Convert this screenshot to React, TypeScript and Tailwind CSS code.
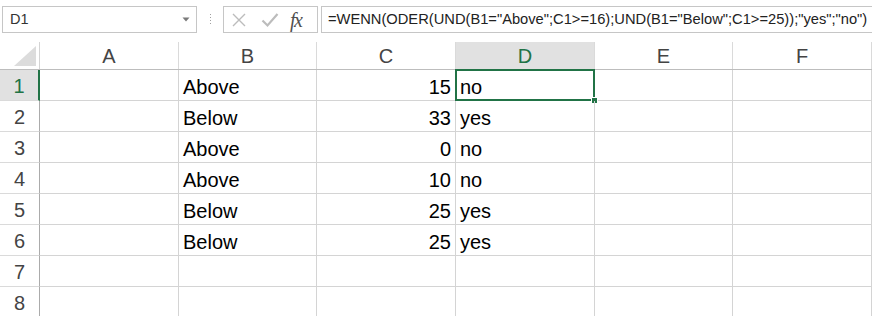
import React from "react";

const cols = ["A", "B", "C", "D", "E", "F"];
const widths = ["w-[139px]", "w-[138px]", "w-[139px]", "w-[139px]", "w-[138px]", "w-[139px]"];

const rows: { b: string; c: string; d: string }[] = [
  { b: "Above", c: "15", d: "no" },
  { b: "Below", c: "33", d: "yes" },
  { b: "Above", c: "0", d: "no" },
  { b: "Above", c: "10", d: "no" },
  { b: "Below", c: "25", d: "yes" },
  { b: "Below", c: "25", d: "yes" },
  { b: "", c: "", d: "" },
  { b: "", c: "", d: "" },
];

const FormulaBar = () => (
  <div className="flex items-start h-[42px] pt-[6px] bg-white">
    <div className="ml-[2px] w-[195px] h-[27px] border border-[#c6c6c6] flex items-center justify-between pl-[7px] pr-[6px] text-[14.5px] text-[#333]">
      <span>D1</span>
      <svg width="8" height="5" viewBox="0 0 8 5">
        <path d="M0.5 0.5 L7.5 0.5 L4 4.5 Z" fill="#7a7a7a" />
      </svg>
    </div>
    <div className="w-[26px] h-[27px] flex items-center justify-center">
      <svg width="3" height="11" viewBox="0 0 3 11">
        <rect x="1" y="0" width="1" height="1" fill="#a0a0a0" />
        <rect x="1" y="3" width="1" height="1" fill="#a0a0a0" />
        <rect x="1" y="6" width="1" height="1" fill="#a0a0a0" />
        <rect x="1" y="9" width="1" height="1" fill="#a0a0a0" />
      </svg>
    </div>
    <div className="w-[95px] h-[27px] border border-[#c6c6c6] flex items-center">
      <svg className="ml-[7px]" width="16" height="16" viewBox="0 0 16 16">
        <path d="M2 2 L14 14 M14 2 L2 14" stroke="#bcbcbc" strokeWidth="1.4" fill="none" />
      </svg>
      <svg className="ml-[14px]" width="18" height="16" viewBox="0 0 18 16">
        <path d="M1.5 8.5 L6.5 13.5 L16.5 2" stroke="#bcbcbc" strokeWidth="2.2" fill="none" />
      </svg>
      <span className="ml-[11px] text-[20px] leading-none italic text-[#505050] font-['Liberation_Serif',serif] tracking-[-1.5px]">fx</span>
    </div>
    <div className="ml-[3px] flex-1 h-[27px] border border-r-0 border-[#c6c6c6] flex items-center pl-[6px] text-[14.7px] text-[#222] whitespace-nowrap overflow-hidden">
      =WENN(ODER(UND(B1="Above";C1&gt;=16);UND(B1="Below";C1&gt;=25));"yes";"no")
    </div>
  </div>
);

const HeaderRow = () => (
  <div className="flex h-[28px] border-b border-[#bdbdbd]">
    <div className="w-[40px] border-r border-[#d4d4d4] flex items-end justify-end pr-[3px] pb-[3px]">
      <svg width="22" height="20" viewBox="0 0 22 20">
        <path d="M22 0 L22 20 L0 20 Z" fill="#dcdcdc" />
      </svg>
    </div>
    {cols.map((c, i) => (
      <div
        key={c}
        className={`${widths[i]} flex items-center justify-center border-r border-[#dadada] text-[20px] ${
          c === "D" ? "bg-[#e1e1e1] text-[#217346]" : "text-[#444]"
        }`}
      >
        {c}
      </div>
    ))}
  </div>
);

const App = () => {
  return (
    <div className="w-[872px] h-[316px] overflow-hidden bg-white font-['Liberation_Sans',Arial,sans-serif]">
      <FormulaBar />
      <HeaderRow />
      {rows.map((r, i) => (
        <div key={i} className="flex h-[31px]">
          <div
            className={`w-[40px] flex items-end justify-center border-b border-[#dadada] border-r text-[20px] leading-[24px] pb-[2px] ${
              i === 0 ? "bg-[#e1e1e1] text-[#217346] border-r-[#217346] border-r-2" : "text-[#444] border-r-[#ababab]"
            }`}
          >
            {i + 1}
          </div>
          <div className="w-[139px] border-r border-b border-[#d4d4d4]" />
          <div className="w-[138px] border-r border-b border-[#d4d4d4] flex items-end pl-[4px] pb-[1px] text-[20px] leading-[24px] text-black">
            {r.b}
          </div>
          <div className="w-[139px] border-r border-b border-[#d4d4d4] flex items-end justify-end pr-[4px] pb-[1px] text-[20px] leading-[24px] text-black">
            {r.c}
          </div>
          <div className="relative w-[139px] border-r border-b border-[#d4d4d4] flex items-end pl-[4px] pb-[1px] text-[20px] leading-[24px] text-black">
            {r.d}
            {i === 0 && (
              <>
                <div className="absolute left-[-1px] top-[-1px] right-[-1px] bottom-[-1px] border-2 border-[#217346]" />
                <div className="absolute right-[-4px] bottom-[-4px] w-[7px] h-[7px] bg-[#217346] border border-white" />
              </>
            )}
          </div>
          <div className="w-[138px] border-r border-b border-[#d4d4d4]" />
          <div className="w-[139px] border-r border-b border-[#d4d4d4]" />
        </div>
      ))}
    </div>
  );
};

export default App;
